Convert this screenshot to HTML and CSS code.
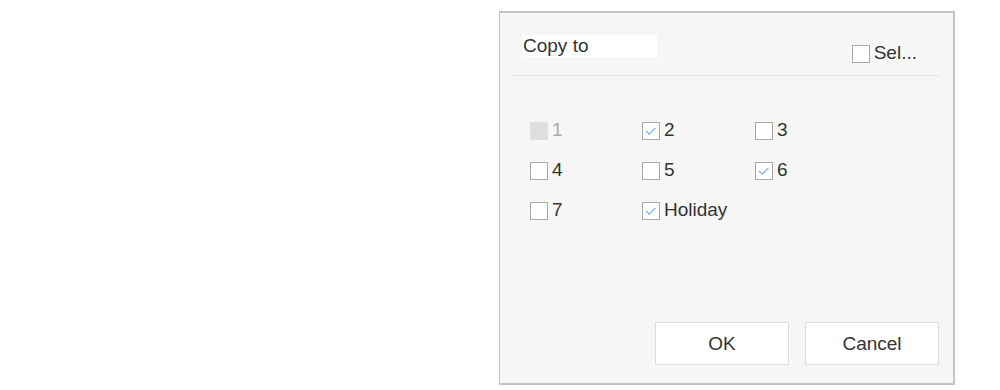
FILE: index.html
```html
<!DOCTYPE html>
<html lang="en">
<head>
    <meta charset="UTF-8">
    <title>Copy to</title>
    <link rel="stylesheet" href="styles.css">
</head>
<body>
    <div class="page">
        <div class="dialog">
            <div class="head">
                <div class="title">Copy to</div>
                <label class="item">
                    <span class="box"></span><span class="text">Sel...</span>
                </label>
            </div>
            <div class="days">
                <label class="item disabled"><span class="box"></span><span class="text">1</span></label>
                <label class="item"><span class="box checked"><svg viewBox="0 0 18 18"><path d="M3.5 9 L7 12.5 L14 5.5"/></svg></span><span class="text">2</span></label>
                <label class="item"><span class="box"></span><span class="text">3</span></label>
                <label class="item"><span class="box"></span><span class="text">4</span></label>
                <label class="item"><span class="box"></span><span class="text">5</span></label>
                <label class="item"><span class="box checked"><svg viewBox="0 0 18 18"><path d="M3.5 9 L7 12.5 L14 5.5"/></svg></span><span class="text">6</span></label>
                <label class="item"><span class="box"></span><span class="text">7</span></label>
                <label class="item"><span class="box checked"><svg viewBox="0 0 18 18"><path d="M3.5 9 L7 12.5 L14 5.5"/></svg></span><span class="text">Holiday</span></label>
            </div>
            <div class="buttons">
                <button class="btn">OK</button>
                <button class="btn">Cancel</button>
            </div>
        </div>
    </div>
</body>
</html>
```

FILE: styles.css
```css
* {
    margin: 0;
    padding: 0;
    box-sizing: border-box;
}

body {
    background: #fff;
    font-family: "Liberation Sans", Arial, sans-serif;
    color: #333;
}

.page {
    display: flex;
    justify-content: flex-end;
    padding: 11px 45px 0 0;
}

.dialog {
    width: 456px;
    height: 374px;
    background: #f6f6f6;
    border: 2px solid #c4c4c4;
    border-left-width: 1px;
    display: flex;
    flex-direction: column;
}

.head {
    display: flex;
    justify-content: space-between;
    align-items: flex-end;
    margin: 0 13px;
    padding: 22px 23px 12px 9px;
    border-bottom: 1px dotted #d6d6d6;
    height: 63px;
}

.title {
    width: 135px;
    height: 22px;
    background: #fff;
    font-size: 19px;
    line-height: 22px;
    padding-left: 1px;
    margin-bottom: 6px;
}

.item {
    display: flex;
    align-items: flex-end;
    font-size: 19px;
    line-height: 18px;
    height: 18px;
}

.text {
    padding-bottom: 1px;
}

.box {
    width: 18px;
    height: 18px;
    flex-shrink: 0;
    background: #fff;
    border: 1px solid #a8a8a8;
    margin-right: 4px;
    display: flex;
    align-items: center;
    justify-content: center;
}

.box svg {
    width: 18px;
    height: 18px;
    fill: none;
    stroke: #79acf0;
    stroke-width: 1.4;
}

.disabled .box {
    background: #dedede;
    border: 1px dotted #e6e6e6;
}

.disabled .text {
    color: #aaa;
}

.days {
    display: grid;
    grid-template-columns: 112px 113px 113px;
    row-gap: 22px;
    padding: 46px 0 0 30px;
}

.buttons {
    margin-top: auto;
    display: flex;
    justify-content: flex-end;
    gap: 16px;
    padding: 0 14px 18px 0;
}

.btn {
    width: 134px;
    height: 43px;
    background: #fff;
    border: 1px solid #ddd;
    font-family: "Liberation Sans", Arial, sans-serif;
    font-size: 19px;
    color: #333;
}
```
